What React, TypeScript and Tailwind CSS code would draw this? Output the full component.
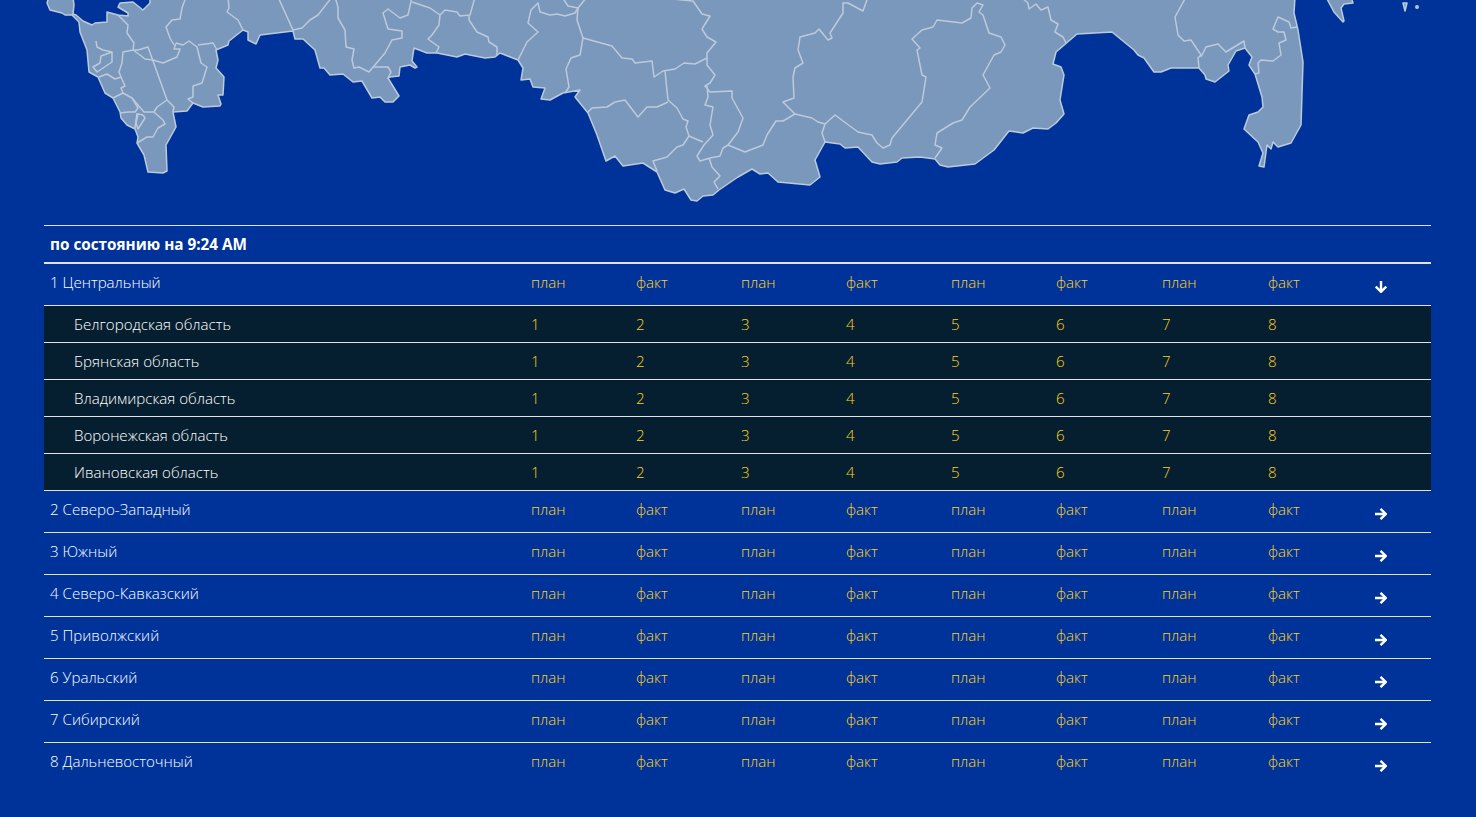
const LAND =
  "47,3 50,10 62,13 65,15 72,15 75,18 79,22 80,32 87,50 89,72 98,77 105,93 113,98 120,112 121,118 127,125 135,129 138,137 137,143 144,155 148,172 163,173 167,171 166,145 176,127 173,112 187,111 193,103 203,107 220,106 221,104 218,95 223,95 224,77 216,68 218,60 216,50 228,45 229,41 243,30 248,32 248,40 256,44 260,35 293,31 295,39 303,39 315,50 320,68 324,68 330,75 343,74 353,82 362,81 372,98 380,97 385,102 393,102 399,96 388,78 390,77 399,76 400,67 410,65 415,68 417,67 412,61 414,48 427,53 437,53 457,57 465,54 485,58 495,57 500,53 518,60 523,68 521,80 530,79 533,87 545,88 541,99 550,100 563,93 580,90 575,97 588,113 597,135 606,161 615,156 623,166 643,163 657,172 665,190 675,193 684,189 691,200 697,201 703,196 713,195 719,190 738,177 752,169 760,174 768,173 778,182 810,185 820,177 815,160 825,142 840,144 845,148 858,147 872,162 880,164 897,162 902,158 920,157 935,159 940,165 948,167 975,164 994,150 1009,131 1023,133 1033,128 1048,129 1056,123 1064,114 1060,100 1064,75 1061,67 1053,64 1056,52 1077,34 1112,32 1134,50 1138,55 1144,58 1154,72 1161,72 1171,68 1199,68 1205,75 1206,79 1215,82 1229,71 1228,65 1236,51 1245,48 1252,57 1249,65 1255,74 1262,97 1263,107 1258,112 1249,115 1244,129 1258,142 1263,153 1259,166 1264,167 1267,145 1271,149 1273,142 1278,147 1291,143 1301,125 1303,62 1298,30 1294,13 1295,-3 150,-3 150,3 143,10 133,2 120,3 118,7 128,13 128,16 118,15 107,12 107,22 95,23 92,25 83,21 76,15 73,14 74,5 73,-3 49,-3";

const ISLANDS = [
  "1326,-3 1334,12 1343,22 1344,21 1341,8 1344,4 1353,3 1351,-3",
  "1403,3 1407,3 1405,11",
];

const BORDERS = [
  "118,15 128,25 127,33 134,43 133,50 123,52 122,63 119,72 121,77 115,79 107,74 99,77",
  "96,41 97,47 103,50 112,52 101,56 100,63 93,67 97,72 112,62 112,52",
  "121,77 125,86 121,88 123,93 113,98",
  "123,93 132,98 144,112 154,112 163,120 165,124 158,128 153,137 147,137 137,143",
  "120,113 128,112 135,112 138,108 132,98",
  "137,113 135,128",
  "143,115 145,118 138,129 136,123 138,114 143,115",
  "133,50 138,50 148,47 167,100 174,107 173,112",
  "133,50 140,55 145,59 153,60 163,63 177,57 180,49 174,49 176,43",
  "186,-3 182,8 180,19 172,20 166,27 170,38 174,45",
  "176,43 183,45 189,41 197,47 201,63 207,67 202,83 193,86 193,97 188,99 193,103",
  "198,45 213,43 217,50",
  "167,100 157,107 154,112",
  "228,-3 229,8 227,12 238,20 243,30",
  "278,-3 293,30 302,28 310,20 318,15 332,-3",
  "335,-3 338,7 338,18 345,30 346,47 354,49 352,60 354,68 359,67 369,72 385,53 392,40 402,38 402,31 388,29 383,13 388,9 400,18 408,15 412,-3",
  "373,67 388,67 391,72 388,78",
  "412,2 430,8 440,15 439,25 432,35 428,39 439,47 436,53",
  "440,15 445,10 457,12 460,16 470,15 475,-3",
  "469,16 469,20 477,32 488,37 489,42 497,47 497,55",
  "518,60 527,42 538,32 528,23 531,10 538,3 540,12 550,15 557,14 565,16 575,13 578,8 587,-3",
  "562,-3 568,6 578,8 577,20 583,38 580,55 571,58 566,69 569,87 565,93",
  "583,38 612,46 622,58 632,59 635,63 652,61 654,77 663,71 675,69 684,63 695,64 707,58",
  "672,-1 693,1 702,14 710,16 702,29 707,37 716,42 707,53 707,65 715,75 710,83 705,86 710,92 732,91 732,98 743,118 738,132 728,145 723,148 720,156 710,158 700,161 697,156 704,145 713,135 710,125 713,107 705,105 708,97 707,86",
  "665,71 668,100 677,108 683,119 688,121 686,127 689,136 703,142",
  "588,112 592,108 607,107 615,102 625,100 638,117 647,107 657,107 668,102",
  "689,136 683,145 677,147 667,157 653,161 657,171",
  "709,158 712,167 720,176 714,182 718,189",
  "728,145 745,152 763,145 767,135 776,121 783,121 795,114 783,102 794,98 793,77 795,68 803,63 798,50 800,37 815,33 819,29 828,40 832,38 830,33 843,13 843,3 848,3 863,11 868,-3",
  "795,114 812,118 818,122 825,124 822,133 825,142",
  "825,124 835,115 858,132 872,135 877,143 883,148 890,145 892,138 922,102 926,77 922,75 917,50 920,48 912,39 922,30 933,27 937,20 962,23 971,18 972,8 977,3 983,5 979,12 983,15 989,33 1001,37 1005,45 1001,52 994,55 983,75 990,88 970,107 962,120 953,123 937,133 935,145 942,148 935,158",
  "1021,-3 1028,3 1029,9 1036,4 1041,10 1048,7 1051,20 1058,24 1055,32 1063,37 1066,43",
  "1186,-3 1175,17 1178,35 1184,41 1191,40 1201,55 1198,58 1199,68",
  "1201,57 1206,47 1218,44 1226,52 1244,41 1245,48",
  "1255,74 1259,73 1258,63 1261,60 1273,61 1281,55 1279,43 1286,40 1284,32 1278,32 1273,29 1278,17 1289,22 1291,28 1297,27",
];

const DISTRICTS = [
  "1 Центральный",
  "2 Северо-Западный",
  "3 Южный",
  "4 Северо-Кавказский",
  "5 Приволжский",
  "6 Уральский",
  "7 Сибирский",
  "8 Дальневосточный",
];

const REGIONS = [
  "Белгородская область",
  "Брянская область",
  "Владимирская область",
  "Воронежская область",
  "Ивановская область",
];

const HEADS = ["план", "факт", "план", "факт", "план", "факт", "план", "факт"];
const COLS =
  "grid grid-cols-[481px_105px_105px_105px_105px_105px_106px_106px_107px_1fr]";

function RussiaMap() {
  return (
    <svg viewBox="0 0 1476 225" className="block h-[225px] w-full">
      <g fill="#7a98bb" stroke="#bccadc" strokeWidth="1.5" strokeLinejoin="round">
        <polygon points={LAND} />
        {ISLANDS.map((p) => (
          <polygon key={p} points={p} />
        ))}
        <circle cx="1417" cy="7" r="1.2" />
      </g>
      <g fill="none" stroke="#bccadc" strokeWidth="1.5" strokeLinejoin="round">
        {BORDERS.map((p) => (
          <polyline key={p} points={p} />
        ))}
      </g>
    </svg>
  );
}

function Arrow({ down }: { down?: boolean }) {
  return (
    <svg
      viewBox="0 0 12 12"
      className={`h-3 w-3 ${down ? "rotate-90" : ""}`}
      fill="none"
      stroke="white"
      strokeWidth="2.4"
    >
      <path d="M0 6H10.5M5.5 0.8L10.8 6L5.5 11.2" />
    </svg>
  );
}

function DistrictRow({ name, open, last }: { name: string; open?: boolean; last?: boolean }) {
  return (
    <div className={`${COLS} h-[42px] pt-[8px] ${last ? "" : "border-b border-[#dfe3ea]"}`}>
      <div className="pl-[6px] text-white">{name}</div>
      {HEADS.map((h, i) => (
        <div key={i} className="pl-[6px] text-[#ffd21a]">
          {h}
        </div>
      ))}
      <div className="pt-[9px] pl-[6px]">
        <Arrow down={open} />
      </div>
    </div>
  );
}

function RegionRow({ name }: { name: string }) {
  return (
    <div className={`${COLS} h-[37px] items-center border-b border-[#dfe3ea] bg-[#061f30]`}>
      <div className="pl-[30px] text-white">{name}</div>
      {[1, 2, 3, 4, 5, 6, 7, 8].map((n) => (
        <div key={n} className="pl-[6px] text-[#ffd21a]">
          {n}
        </div>
      ))}
    </div>
  );
}

export default function App() {
  return (
    <div className="min-h-[817px] overflow-hidden bg-[#003399] font-['Open_Sans',sans-serif] text-[15.1px] leading-5 font-[350]">
      <RussiaMap />
      <div className="mx-[44px] w-[1387px]">
        <div className="flex h-[39px] items-center border-y border-t-[#dfe3ea] border-b-2 border-b-[#dfe3ea] px-[6px] text-[15.3px] font-bold text-white">
          по состоянию на 9:24 AM
        </div>
        {DISTRICTS.map((d, i) => (
          <div key={d}>
            <DistrictRow name={d} open={i === 0} last={i === DISTRICTS.length - 1} />
            {i === 0 && REGIONS.map((r) => <RegionRow key={r} name={r} />)}
          </div>
        ))}
      </div>
    </div>
  );
}
